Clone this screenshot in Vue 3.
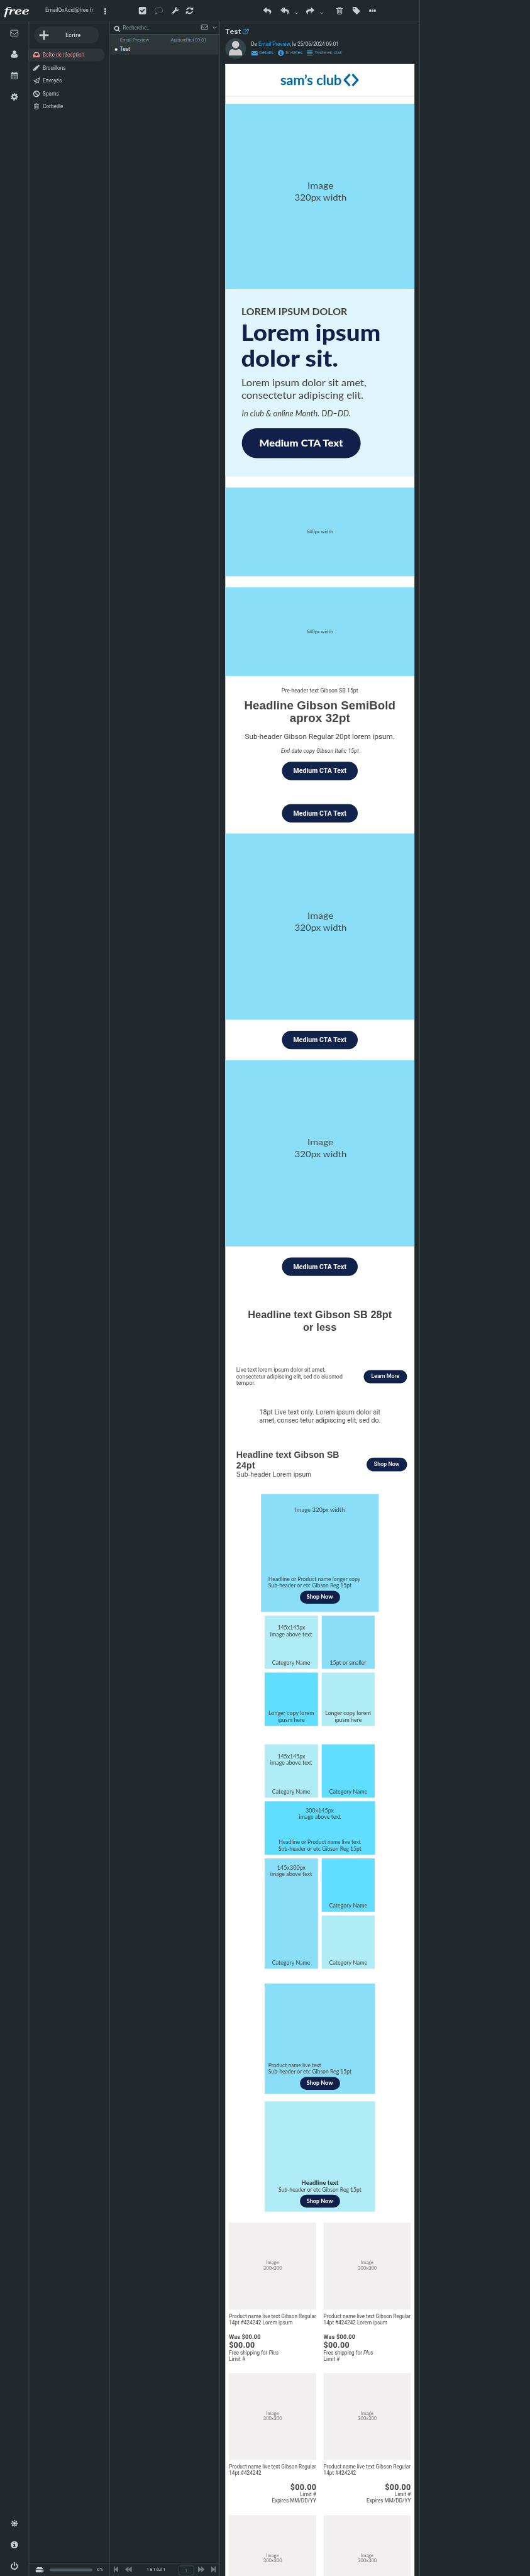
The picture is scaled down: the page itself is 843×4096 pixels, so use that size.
<script setup>
import { h, withDirectives } from 'vue'

// Fits a line of text to the given ink width: display faces are widened,
// interface text is tracked.
const vFit = {
  mounted(el, { value }) {
    if (!value) return
    const scale = 843 / 1440
    const style = getComputedStyle(el)
    const size = parseFloat(style.fontSize)
    const width = el.getBoundingClientRect().width / scale
    const target = value + size * 0.08
    if (/^(Lato|"Liberation Serif")/.test(style.fontFamily)) {
      const origins = { center: 'center', right: 'right' }
      el.style.transformOrigin = (origins[style.textAlign] || 'left') + ' center'
      el.style.transform = `scaleX(${(target / width).toFixed(4)})`
      return
    }
    const gap = (target - width) / (el.textContent.length - 1)
    el.style.letterSpacing = gap.toFixed(3) + 'px'
    el.style.marginRight = (-gap).toFixed(3) + 'px'
  },
}

const L = (props, { slots }) =>
  h('div', { class: 'line' }, [withDirectives(h('span', { class: 'line-in' }, slots.default()), [[vFit, props.w]])])
L.props = ['w']

const s = (d, w = 2) => ({ d, fill: 'none', stroke: 'currentColor', 'stroke-width': w })
const f = (d) => ({ d, fill: 'currentColor', 'fill-rule': 'evenodd' })
const ARROW = 'M8.3 189.8L184.3 37.9C199.7 24.5 224 35.3 224 56v80c160.600 1.800 288 34 288 186.300 0 61.400-39.600 122.300-83.300 154.100-13.700 9.900-33.100-2.500-28.100-18.600 45.300-145-21.500-183.500-176.600-185.700V360c0 20.700-24.300 31.500-39.700 18.200l-176-152c-11.100-9.600-11.100-26.800 0-36.400z'
const icons = {
  mail: ['0 0 22 18', s('M3 1H19Q21 1 21 3V15Q21 17 19 17H3Q1 17 1 15V3Q1 1 3 1Z', 1.7), s('M1.500 5.500L9.500 11.800Q11 12.800 12.500 11.800L20.500 5.500', 1.6)],
  user: ['0 0 18 20', f('M9 0A4.700 5.200 0 0 1 9 10.400A4.700 5.200 0 0 1 9 0ZM4.500 9Q9 13 13.500 9C17 9.500 18 13 18 16.500Q18 20 14.500 20H3.500Q0 20 0 16.500C0 13 1 9.500 4.500 9Z')],
  calendar: ['0 0 18 20', f('M1.500 2.500H3V1.500Q3 0 4.500 0T6 1.500V2.500H12V1.500Q12 0 13.500 0T15 1.500V2.500H16.500Q18 2.500 18 4V18.500Q18 20 16.500 20H1.500Q0 20 0 18.500V4Q0 2.500 1.500 2.500ZM1.500 7V9.800H4.600V7ZM5.500 7V9.800H8.600V7ZM9.500 7V9.800H12.600V7ZM13.500 7V9.800H16.500V7ZM1.500 10.900V14.100H4.600V10.900ZM5.500 10.900V14.100H8.600V10.900ZM9.500 10.900V14.100H12.600V10.900ZM13.500 10.900V14.100H16.500V10.900ZM1.500 15.200V18.500H4.600V15.200ZM5.500 15.200V18.500H8.600V15.200ZM9.500 15.200V18.500H12.600V15.200ZM13.500 15.200V18.500H16.500V15.200Z')],
  cog: ['0 0 20 20', s('M10 4.700A5.300 5.300 0 1 1 9.990 4.700Z', 4), { ...s('M10 1.500A8.500 8.500 0 1 1 9.990 1.500Z', 3), 'stroke-dasharray': '3.700 2.976', 'stroke-dashoffset': '1.850' }],
  sun: ['0 0 20 20', f('M10 0L12 3.500L17 3L16.500 8L20 10L16.500 12L17 17L12 16.500L10 20L8 16.500L3 17L3.500 12L0 10L3.500 8L3 3L8 3.500ZM10 4.500A5.500 5.500 0 1 0 10 15.500A5.500 5.500 0 1 0 10 4.500ZM10 6A4 4 0 1 1 10 14A4 4 0 1 1 10 6Z')],
  info: ['0 0 20 20', f('M10 0A10 10 0 1 1 10 20A10 10 0 1 1 10 0ZM8.300 3.500V6.200H11.700V3.500ZM6.800 8V10H8.300V14H6.800V16H13.200V14H11.700V8Z')],
  power: ['0 0 20 21', s('M5.500 4.500A8.200 8.200 0 1 0 14.500 4.500', 3), s('M10 0V11', 3)],
  dots: ['0 0 6 18', f('M3 0A2.700 2.700 0 1 1 2.990 0ZM3 6.300A2.700 2.700 0 1 1 2.990 6.300ZM3 12.600A2.700 2.700 0 1 1 2.990 12.600Z')],
  check: ['0 0 20 20', f('M3.500 0H16.500Q20 0 20 3.500V16.500Q20 20 16.500 20H3.500Q0 20 0 16.500V3.500Q0 0 3.500 0ZM3.300 10.200L8.700 15.600L17 7.200L14.700 5L8.700 11L5.500 7.900Z')],
  comment: ['0 0 23 20', s('M11.500 1C17.500 1 22 4.300 22 8.700S17.500 16.300 11.500 16.300Q10 16.300 8.700 16Q6 18.600 2.300 19Q4.300 17 4.500 14.500C2.200 13 1 11 1 8.700C1 4.300 5.500 1 11.500 1Z', 1.5)],
  wrench: ['0 0 20 20', f('M19.500 5.200L16 7.500L13 5.800V3L16.300 .600Q13.500 -.700 10.800 1.200Q8 3.300 9 7.500L.800 15.500Q-.500 17 .800 18.800Q2.700 20.500 4.300 19.200L12.300 11Q16 12 18.300 9.500Q20.200 7.200 19.500 5.200ZM3 16A1 1 0 1 1 2.990 18A1 1 0 1 1 3 16Z')],
  refresh: ['0 0 20 20', s('M2 8.500A8.200 7.700 0 0 1 16 5M18 11.500A8.200 7.700 0 0 1 4 15', 3.200), f('M20 .500V8H12.500ZM0 19.500V12H7.500Z')],
  reply: ['0 24 512 464', f(ARROW)],
  replyAll: ['-110 24 622 464', f(ARROW), s('M120 50L-70 208L120 366', 55)],
  forward: ['0 24 512 464', { ...f(ARROW), transform: 'translate(512 0) scale(-1 1)' }],
  chevron: ['0 0 10 6', s('M.700 .700L5 5L9.300 .700', 1.5)],
  trash: ['0 0 18 20', s('M2.500 4V17Q2.500 19 4.500 19H13.500Q15.500 19 15.500 17V4', 1.7), s('M0 4H18M5.500 4L6.300 1H11.700L12.500 4', 1.6), s('M6 7V16.500M9 7V16.500M12 7V16.500', 1.5)],
  tag: ['0 0 20 20', f('M1.500 0H8Q9.500 0 10.700 1.200L19.400 10Q20.500 11.300 19.400 12.500L12.800 19.300Q11.500 20.500 10.200 19.300L1.200 10.500Q0 9.500 0 8V1.500Q0 0 1.500 0ZM4.300 2.600A1.700 1.700 0 1 0 4.310 2.600Z')],
  ellipsis: ['0 0 18 6', f('M1 0H4Q5 0 5 1V5Q5 6 4 6H1Q0 6 0 5V1Q0 0 1 0ZM7.500 0H10.500Q11.500 0 11.500 1V5Q11.500 6 10.500 6H7.500Q6.500 6 6.500 5V1Q6.500 0 7.500 0ZM14 0H17Q18 0 18 1V5Q18 6 17 6H14Q13 6 13 5V1Q13 0 14 0Z')],
  inbox: ['0 0 18 14', f('M4.500 0H13.500Q14.500 0 15 1L18 8V13Q18 14 17 14H1Q0 14 0 13V8L3 1Q3.500 0 4.500 0ZM5 2.300L2.600 8H6L7 10.300H11L12 8H15.400L13 2.300Z')],
  pencil: ['0 0 18 18', f('M12.700 1.200Q14 -.300 15.400 1L17.200 2.800Q18.300 4 17 5.400L15.700 6.600L11.400 2.400ZM10.500 3.400L14.700 7.600L4.500 17.800L0 18V13.600ZM1.500 14.200V16.500H3.800L4.500 15.700L2.200 13.500Z')],
  plane: ['0 0 18 18', f('M18 0L15.300 16.300L10 14.200L6.800 18V12.800L0 10.200ZM15 3L3.500 10L7 11.300ZM16 3.500L8.200 12.200L14.200 14.600Z')],
  ban: ['0 0 18 18', s('M9 1.300A7.700 7.700 0 1 1 8.990 1.300ZM3.500 3.500L14.500 14.500', 2.400)],
  search: ['0 0 17 17', s('M7 1.300A5.700 5.700 0 1 1 6.990 1.300ZM11 11.200L16 16.200', 2.600)],
  external: ['0 0 17 15', s('M9 2H3Q1 2 1 4V12Q1 14 3 14H11Q13 14 13 12V8', 1.500), s('M6.500 9L15 1.500', 2), f('M10.500 0H17V6.500Z')],
  envelope: ['0 0 17 13', f('M0 .500H17V1.500L9.500 7.500Q8.500 8.200 7.500 7.500L0 1.500ZM0 3L7 8.600Q8.500 9.600 10 8.600L17 3V12Q17 13 16 13H1Q0 13 0 12Z')],
  lines: ['0 0 15 14', s('M0 1H15M0 5H15M0 9H15M0 13H15', 1.900)],
  drive: ['0 0 21 14', f('M5 0H16Q17 0 17.500 1L20.500 5.700H.500L3.500 1Q4 0 5 0ZM0 6.800H21V13Q21 14 20 14H1Q0 14 0 13ZM14 9.300V11.300H15.800V9.300ZM17.300 9.300V11.300H19.100V9.300Z')],
  first: ['0 0 12 16', f('M0 0H3V7L12 0V16L3 9V16H0Z')],
  prev: ['0 0 18 16', f('M9 0V7L18 0V16L9 9V16L0 8Z')],
  next: ['0 0 18 16', f('M9 0V7L0 0V16L9 9V16L18 8Z')],
  last: ['0 0 12 16', f('M12 0H9V7L0 0V16L9 9V16H12Z')],
}
const Icon = (props) => {
  const [viewBox, ...paths] = icons[props.n]
  return h('svg', { viewBox, preserveAspectRatio: 'none', class: 'ic' }, paths.map((p) => h('path', p)))
}
Icon.props = ['n']

const folders = [
  { icon: 'inbox', name: 'Boîte de réception', w: 112, on: true },
  { icon: 'pencil', name: 'Brouillons', w: 61.5 },
  { icon: 'plane', name: 'Envoyés', w: 50.5 },
  { icon: 'ban', name: 'Spams', w: 43 },
  { icon: 'trash', name: 'Corbeille', w: 54.5 },
]
</script>

<template>
  <div class="window">
    <div class="app">
      <header class="topbar">
        <div class="brand"><L :w="66">free</L></div>
        <div class="account"><L :w="129.4">EmailOnAcid@free.fr</L></div>
        <Icon n="dots" class="t-dots" />
        <Icon n="check" class="t-check" />
        <Icon n="comment" class="t-comment" />
        <Icon n="wrench" class="t-wrench" />
        <Icon n="refresh" class="t-refresh" />
        <Icon n="reply" class="t-reply" />
        <Icon n="replyAll" class="t-all" />
        <Icon n="chevron" class="t-chev" />
        <Icon n="forward" class="t-fwd" />
        <Icon n="chevron" class="t-chev2" />
        <Icon n="trash" class="t-trash" />
        <Icon n="tag" class="t-tag" />
        <Icon n="ellipsis" class="t-more" />
      </header>

      <div class="cols">
        <nav class="rail">
          <Icon n="mail" class="r-mail" />
          <Icon n="user" class="r-user" />
          <Icon n="calendar" class="r-cal" />
          <Icon n="cog" class="r-cog" />
          <div class="grow"></div>
          <Icon n="sun" class="r-sun" />
          <Icon n="info" class="r-info" />
          <Icon n="power" class="r-power" />
        </nav>

        <aside class="folders">
          <div class="compose">
            <span class="plus"></span>
            <L :w="40">Ecrire</L>
          </div>
          <div v-for="x in folders" :key="x.name" class="folder" :class="{ on: x.on }">
            <Icon :n="x.icon" :class="'f-' + x.icon" />
            <L :w="x.w">{{ x.name }}</L>
          </div>
          <div class="grow"></div>
          <div class="quota">
            <Icon n="drive" class="q-drive" />
            <span class="bar"></span>
            <L :w="14.6">0%</L>
          </div>
        </aside>

        <section class="list">
          <div class="search">
            <Icon n="search" class="s-glass" />
            <L :w="74">Recherche...</L>
            <Icon n="mail" class="s-mail" />
            <Icon n="chevron" class="s-chev" />
          </div>
          <div class="msg">
            <div class="meta"><L :w="78">Email Preview</L><L :w="96">Aujourd'hui 09:01</L></div>
            <div class="subject"><i></i><L :w="26.5">Test</L></div>
          </div>
          <div class="grow"></div>
          <div class="pager">
            <Icon n="first" class="p-first" />
            <Icon n="prev" class="p-prev" />
            <L :w="50.5">1 à 1 sur 1</L>
            <span class="page">1</span>
            <Icon n="next" class="p-next" />
            <Icon n="last" class="p-last" />
          </div>
        </section>

        <main class="view">
          <div class="title"><L :w="41">Test</L><Icon n="external" class="v-ext" /></div>
          <div class="sender">
            <svg class="avatar" viewBox="0 0 56 56">
              <circle cx="28" cy="28" r="28" fill="#34454a" />
              <circle cx="28" cy="17" r="10" fill="#cbcbcb" />
              <path d="M10 45V42Q11 30 20 29.500Q28 34.500 36 29.500Q45 30 46 42V45Q46 47 43.500 47H12.500Q10 47 10 45Z" fill="#cbcbcb" />
            </svg>
            <div class="info">
              <L :w="237.500" class="from">De <a>Email Preview</a>, le 25/06/2024 09:01</L>
              <div class="links">
                <Icon n="envelope" class="k-env" /><L :w="38">Détails</L>
                <Icon n="info" class="k-info" /><L :w="45">En-têtes</L>
                <Icon n="lines" class="k-lines" /><L :w="74">Texte en clair</L>
              </div>
            </div>
          </div>

          <article class="mail">
            <div class="logo">
              <L :w="163">sam’s club</L>
              <svg viewBox="0 0 42 35"><path d="M17.500 2L3.500 17.500L17.500 33M24.500 2L38.500 17.500L24.500 33" fill="none" stroke="#0067a0" stroke-width="5.600" /></svg>
            </div>
            <div class="pic hero-pic"><L :w="69">Image</L><L :w="139.500">320px width</L></div>
            <div class="hero">
              <L :w="285" class="h-eyebrow">LOREM IPSUM DOLOR</L>
              <div class="h-title"><L :w="374">Lorem ipsum</L><L :w="259">dolor sit.</L></div>
              <div class="h-body"><L :w="337">Lorem ipsum dolor sit amet,</L><L :w="329">consectetur adipiscing elit.</L></div>
              <L :w="294" class="h-date">In club &amp; online Month. DD–DD.</L>
              <div class="h-cta"><L :w="225">Medium CTA Text</L></div>
            </div>
            <div class="pic wide w1"><L :w="70.600">640px width</L></div>
            <div class="pic wide w2"><L :w="70.600">640px width</L></div>

            <div class="copy">
              <L :w="207" class="c-pre">Pre-header text Gibson SB 15pt</L>
              <div class="c-head"><L :w="408">Headline Gibson SemiBold</L><L :w="161.500">aprox 32pt</L></div>
              <L :w="405.600" class="c-sub">Sub-header Gibson Regular 20pt lorem ipsum.</L>
              <L :w="210.700" class="c-end">End date copy GIbson Italic 15pt</L>
              <div class="cta"><L :w="143">Medium CTA Text</L></div>
              <div class="cta second"><L :w="143">Medium CTA Text</L></div>
            </div>
            <div class="pic tall"><L :w="69">Image</L><L :w="139.500">320px width</L></div>
            <div class="strip"><div class="cta"><L :w="143">Medium CTA Text</L></div></div>
            <div class="pic tall"><L :w="69">Image</L><L :w="139.500">320px width</L></div>
            <div class="strip"><div class="cta"><L :w="143">Medium CTA Text</L></div></div>

            <div class="head28"><L :w="389">Headline text Gibson SB 28pt</L><L :w="89">or less</L></div>
            <div class="split live">
              <div><L :w="241">Live text lorem ipsum dolor sit amet,</L><L :w="287.500">consectetur adipiscing elit, sed do eiusmod</L><L :w="50.600">tempor.</L></div>
              <div class="small-cta learn"><L :w="75">Learn More</L></div>
            </div>
            <div class="live18"><L :w="327">18pt Live text only. Lorem ipsum dolor sit</L><L :w="328.500">amet, consec tetur adipiscing elit, sed do.</L></div>
            <div class="split head24">
              <div><L :w="277.500">Headline text Gibson SB</L><L :w="49">24pt</L><L :w="202" class="sub24">Sub-header Lorem ipsum</L></div>
              <div class="small-cta shop"><L :w="68">Shop Now</L></div>
            </div>

            <div class="panel big">
              <L :w="134" class="p-cap">Image 320px width</L>
              <div class="grow"></div>
              <div class="p-left"><L :w="249">Headline or Product name longer copy</L><L :w="225">Sub-header or etc Gibson Reg 15pt</L></div>
              <div class="pill"><L :w="70">Shop Now</L></div>
            </div>
            <div class="tiles">
              <div class="tile a"><div class="up"><L :w="74">145x145px</L><L :w="112.600">image above text</L></div><L :w="102.600">Category Name</L></div>
              <div class="tile b"><L :w="98">15pt or smaller</L></div>
              <div class="tile c"><L :w="123">Longer copy lorem</L><L :w="72">ipusm here</L></div>
              <div class="tile a"><L :w="123">Longer copy lorem</L><L :w="72">ipusm here</L></div>
            </div>
            <div class="tiles second-set">
              <div class="tile a"><div class="up"><L :w="74">145x145px</L><L :w="112.600">image above text</L></div><L :w="102.600">Category Name</L></div>
              <div class="tile c"><L :w="102.600">Category Name</L></div>
              <div class="tile c span2"><div class="up near"><L :w="76">300x145px</L><L :w="112.600">image above text</L></div><L :w="221.500">Headline or Product name live text</L><L :w="224">Sub-header or etc Gibson Reg 15pt</L></div>
              <div class="tile b high"><div class="up near"><L :w="76">145x300px</L><L :w="112.600">image above text</L></div><L :w="102.600">Category Name</L></div>
              <div class="tile c"><L :w="102.600">Category Name</L></div>
              <div class="tile a"><L :w="102.600">Category Name</L></div>
            </div>
            <div class="panel mid">
              <div class="p-left"><L :w="142.500">Product name live text</L><L :w="225">Sub-header or etc Gibson Reg 15pt</L></div>
              <div class="pill"><L :w="70">Shop Now</L></div>
            </div>
            <div class="panel mid pale">
              <div class="p-center"><L :w="100" class="strong">Headline text</L><L :w="224">Sub-header or etc Gibson Reg 15pt</L></div>
              <div class="pill"><L :w="70">Shop Now</L></div>
            </div>

            <div class="products">
              <div v-for="n in 2" :key="'a' + n" class="card one">
                <div class="thumb"><L :w="33">Image</L><L :w="50">300x300</L></div>
                <div class="name"><L :w="235.500">Product name live text Gibson Regular</L><L :w="172">14pt #424242 Lorem ipsum</L></div>
                <L :w="84.700" class="was">Was $00.00</L>
                <L :w="68.500" class="price">$00.00</L>
                <div class="fine"><L :w="133.600">Free shipping for <em>Plus</em></L><L :w="43">Limit #</L></div>
              </div>
              <div v-for="n in 2" :key="'b' + n" class="card two">
                <div class="thumb"><L :w="33">Image</L><L :w="50">300x300</L></div>
                <div class="name"><L :w="235.500">Product name live text Gibson Regular</L><L :w="87">14pt #424242</L></div>
                <L :w="68.500" class="price">$00.00</L>
                <div class="fine"><L :w="42.500">Limit #</L><L :w="119">Expires MM/DD/YY</L></div>
              </div>
              <div v-for="n in 2" :key="'c' + n" class="card">
                <div class="thumb"><L :w="33">Image</L><L :w="50">300x300</L></div>
              </div>
            </div>
          </article>
        </main>
      </div>
    </div>
  </div>
</template>

<style>
html, body { margin: 0; background: #21292c; }
.line { white-space: nowrap; }
.line-in { display: inline-block; white-space: pre; }
.ic { display: block; flex: none; overflow: visible; }
</style>

<style scoped>
.window { width: 843px; height: 4096px; overflow: hidden; background: #21292c; }
.app { width: 1440px; height: 7000px; overflow: hidden; transform: scale(0.585417, 0.585143); transform-origin: 0 0; font-family: Roboto, "Liberation Sans", sans-serif; font-size: 14px; color: #c5d1d3; display: flex; flex-direction: column; }
.grow { flex: 1; }

.topbar { box-sizing: border-box; width: 1141px; height: 58px; border-bottom: 1px solid #4d6066; border-right: 1px solid #4d6066; display: flex; align-items: flex-start; padding-top: 19px; flex: none; }
.brand { box-sizing: border-box; width: 123px; padding-left: 11px; margin-top: -4px; font: italic 28px/32px "Liberation Serif", serif; color: #fff; -webkit-text-stroke: 0.6px #fff; }
.account { width: 160px; line-height: 18px; }
.t-dots { width: 6px; height: 17.500px; margin: 3px 0 0 0; }
.t-check { width: 20px; height: 20px; margin-left: 88px; }
.t-comment { width: 23px; height: 20px; margin-left: 23px; color: #6c787b; }
.t-wrench { width: 20px; height: 20px; margin-left: 23px; }
.t-refresh { width: 20px; height: 20px; margin-left: 19px; }
.t-reply { width: 22px; height: 19px; margin: 1px 0 0 190px; }
.t-all { width: 23px; height: 19px; margin: 1px 0 0 25px; }
.t-chev { width: 10px; height: 5px; margin: 14px 0 0 15px; }
.t-fwd { width: 22px; height: 19px; margin: 1px 0 0 22px; }
.t-chev2 { width: 10px; height: 5px; margin: 14px 0 0 15px; }
.t-trash { width: 17px; height: 20px; margin-left: 35px; }
.t-tag { width: 20px; height: 20px; margin-left: 27px; }
.t-more { width: 18px; height: 6px; margin: 7px 0 0 25px; }

.cols { flex: 1; min-height: 0; display: flex; width: 1141px; }
.rail { width: 78px; border-right: 1px solid #4d6066; display: flex; flex-direction: column; align-items: center; }
.r-mail { width: 22px; height: 18px; margin-top: 23px; }
.r-user { width: 18px; height: 20px; margin-top: 38px; }
.r-cal { width: 18px; height: 20px; margin-top: 38px; }
.r-cog { width: 20px; height: 20px; margin-top: 38px; }
.r-sun { width: 20px; height: 20px; margin-bottom: 38px; }
.r-info { width: 20px; height: 20px; margin-bottom: 37px; }
.r-power { width: 20px; height: 21px; margin-bottom: 17px; }

.folders { width: 218px; border-right: 1px solid #4d6066; display: flex; flex-direction: column; }
.compose { box-sizing: border-box; width: 176px; height: 46px; margin: 14px 0 14px 14px; border-radius: 23px; background: #2c3437; display: flex; align-items: center; padding-left: 14px; font-size: 15px; font-weight: 700; color: #bdc1c2; line-height: 46px; gap: 46px; flex: none; }
.plus { width: 25px; height: 25px; background: linear-gradient(#cacccc, #cacccc) center / 25px 5px no-repeat, linear-gradient(#cacccc, #cacccc) center / 5px 25px no-repeat; }
.folder { box-sizing: border-box; width: 204px; height: 35px; padding-left: 11px; display: flex; align-items: center; line-height: 35px; border-radius: 0 14px 14px 0; flex: none; }
.folder.on { background: #2d3538; color: #f19196; }
.folder .line { margin-left: 8px; }
.folder svg { width: 18px; height: 18px; }
.folder .f-inbox { height: 14px; margin-top: -2px; }
.folder .f-trash { width: 14px; height: 16px; margin: -1px 2px 0; }
.folder .f-pencil { margin-top: -2px; }
.folder .f-plane { margin-top: -2px; }
.quota { height: 34px; border-top: 1px solid #4d6066; display: flex; padding-left: 18px; font-size: 12px; line-height: 34px; }
.q-drive { width: 21px; height: 14px; margin-top: 10px; }
.bar { width: 116px; height: 7px; border-radius: 4px; background: #4d6066; margin: 14px 13px 0 17px; }

.list { width: 299px; border-right: 1px solid #4d6066; display: flex; flex-direction: column; }
.search { box-sizing: border-box; height: 36px; border-bottom: 1px solid #4d6066; display: flex; padding-left: 12px; line-height: 35px; color: #829699; flex: none; }
.search svg { color: #c5d1d3; }
.s-glass { width: 17px; height: 17px; margin: 12px 7px 0 0; }
.search .line { width: 212px; }
.s-mail { width: 19px; height: 14px; margin: 9px 13px 0 0; }
.s-chev { width: 11px; height: 6px; margin-top: 14px; }
.msg { height: 54px; background: #2e3639; flex: none; color: #7f9699; }
.meta { display: flex; justify-content: space-between; padding: 2px 36px 0 28px; font-size: 13px; line-height: 25px; }
.subject { display: flex; align-items: center; color: #fff; line-height: 26px; }
.subject i { width: 6.600px; height: 6.600px; border-radius: 50%; background: #fff; margin: 1px 7px 0 14px; }
.pager { height: 34px; border-top: 1px solid #4d6066; display: flex; font-size: 12px; line-height: 34px; }
.pager svg { color: #707b7f; margin-top: 8px; height: 16px; }
.p-first { width: 12px; margin-left: 11px; }
.p-prev { width: 18px; margin-left: 19px; }
.pager .line { width: 87px; margin-left: 40px; }
.page { box-sizing: border-box; width: 42px; height: 26px; border: 1px solid #4d6066; border-radius: 4px; margin-top: 6px; text-align: center; line-height: 25px; color: #707b7f; }
.p-next { width: 18px; margin-left: 11px; }
.p-last { width: 12px; margin-left: 18px; }

.view { box-sizing: border-box; width: 543px; border-right: 1px solid #4d6066; padding: 15px 14px 0; overflow: hidden; }
.title { display: flex; font-size: 20px; font-weight: 700; line-height: 24px; height: 31px; }
.title .line { margin-top: 0; width: 47px; }
.v-ext { width: 17px; height: 15px; margin-top: 5px; color: #359bdb; }
.sender { display: flex; height: 70px; }
.avatar { width: 56px; height: 56px; margin-right: 14px; }
.from { line-height: 18px; margin-top: 5.500px; }
.from a, .links { color: #3a9fe0; }
.links { display: flex; font-size: 13px; line-height: 16px; margin-top: 7px; }
.k-env { width: 17px; height: 13px; margin: 3px 4px 0 1px; }
.k-info { width: 16px; height: 16px; margin: 1px 5px 0 12px; }
.k-lines { width: 15px; height: 14px; margin: 2px 6px 0 12px; }

.mail { width: 514px; height: 6826px; background: #fff; color: #424242; overflow: hidden; }
.logo { box-sizing: border-box; height: 88px; border-bottom: 1px solid #ccc; margin-bottom: 20px; display: flex; padding: 21px 0 0 150px; font: 500 35px/44px Lato, sans-serif; color: #0067a0; -webkit-text-stroke: 0.900px #0067a0; }
.logo .line { width: 171px; }
.logo svg { width: 42px; height: 35px; margin-top: 5px; }
.pic { box-sizing: border-box; background: #8bdef8; display: flex; flex-direction: column; align-items: center; justify-content: center; text-align: center; font-family: Lato, sans-serif; font-size: 24px; line-height: 32.600px; padding: 0 0 28px 4px; }
.hero-pic { height: 504px; }
.tall { height: 506px; }
.wide { height: 241px; font-size: 14px; line-height: 18px; padding: 0; }
.w1 { margin-top: 30px; }
.w2 { margin-top: 30px; }
.hero { box-sizing: border-box; height: 507px; margin-top: 1.500px; background: #def5fc; padding: 43px 0 0 45px; font-family: Lato, sans-serif; }
.h-eyebrow { font-size: 27px; line-height: 30px; font-weight: 700; margin-left: -1px; }
.h-title { margin: 7px 0 0 -2px; font-size: 61px; line-height: 70.500px; font-weight: 900; color: #10204b; }
.h-body { margin: 12.600px 0 0 -1px; font-size: 27.500px; line-height: 35px; }
.h-date { margin: 20px 0 27px; font-size: 21.500px; line-height: 26px; font-style: italic; }
.h-cta { width: 323px; height: 81px; border-radius: 41px; background: #10204b; color: #fff; font-size: 27px; line-height: 79px; font-weight: 900; text-align: center; }

.copy { box-sizing: border-box; height: 428px; padding-top: 30.500px; text-align: center; }
.c-pre { font-size: 15px; line-height: 18px; }
.c-head { margin-top: 14.300px; font: 700 32px/34.400px "Liberation Sans", Arial, sans-serif; }
.c-sub { margin-top: 20.400px; font-size: 20px; line-height: 24px; }
.c-end { margin-top: 18.900px; font-size: 15px; line-height: 18px; font-style: italic; }
.cta { width: 206px; height: 50px; margin: 0 auto; border-radius: 25px; background: #11224b; color: #fff; font-size: 18px; font-weight: 700; line-height: 50px; text-align: center; }
.c-end + .cta { margin-top: 20.300px; }
.cta.second { margin-top: 65px; }
.strip { box-sizing: border-box; height: 110px; padding-top: 30px; }

.head28 { box-sizing: border-box; height: 217.300px; padding-top: 59.500px; font: 700 28px/33.500px "Liberation Sans", Arial, sans-serif; text-align: center; }
.split { display: flex; justify-content: space-between; padding: 0 20.500px 0 30px; }
.small-cta { height: 36.500px; border-radius: 18.300px; background: #11224b; color: #fff; font: 500 15px/35px Roboto, sans-serif; text-align: center; }
.live { height: 112px; font-size: 15px; line-height: 18px; margin-top: 0; }
.learn { width: 117.500px; margin-top: 9px; }
.live18 { height: 113.500px; font-size: 18px; line-height: 22.100px; text-align: center; }
.head24 { height: 121px; font: 700 24px/29px "Liberation Sans", Arial, sans-serif; }
.sub24 { font-size: 17.500px; line-height: 20px; font-weight: 400; }
.shop { width: 109.500px; margin-top: 22px; }
.head28 { margin-bottom: 30px; height: 217.300px; margin-bottom: 0; }

.panel, .tiles { font-family: Lato, sans-serif; font-size: 15px; line-height: 18px; }
.panel { box-sizing: border-box; margin: 0 auto; display: flex; flex-direction: column; justify-content: flex-end; background: #8bdef8; }
.big { width: 320px; height: 320px; padding: 32px 0 22px; margin-bottom: 10px; }
.p-cap { font-size: 16px; line-height: 20px; text-align: center; }
.big .p-left { padding-left: 20px; }
.mid { width: 300px; height: 300px; padding-bottom: 11px; margin-bottom: 20px; }
.mid .p-left { padding-left: 10px; }
.pale { background: #afecf6; margin-bottom: 30px; }
.p-center { text-align: center; }
.strong { font-weight: 900; }
.pill { width: 109px; height: 35px; margin: 6px auto 0; border-radius: 18px; background: #10204b; color: #fff; font-weight: 900; line-height: 33px; text-align: center; }
.tiles { display: grid; grid-template-columns: 145px 144px; gap: 10px; grid-auto-rows: 145px; width: 300px; margin: 0 auto; }
.second-set { margin: 50px auto 40px; }
.tile { box-sizing: border-box; display: flex; flex-direction: column; justify-content: flex-end; text-align: center; padding-bottom: 8px; }
.tile.a { background: #afecf6; }
.tile.b { background: #8bdef8; }
.tile.c { background: #60ddff; }
.up { margin-bottom: auto; padding-top: 23px; }
.up.near { padding-top: 15px; }
.span2 { grid-column: span 2; width: 300px; }
.high { grid-row: span 2; }

.products { display: grid; grid-template-columns: 237px 237px; column-gap: 20px; padding-left: 10px; }
.card.one { height: 408.750px; }
.card.two { height: 386.250px; }
.thumb { box-sizing: border-box; height: 236px; background: #f1eff0; display: flex; flex-direction: column; align-items: center; justify-content: center; text-align: center; font: 12.500px/15px Lato, sans-serif; color: #6e6e6e; padding-bottom: 4px; }
.name { margin-top: 9.800px; font-size: 14px; line-height: 16.500px; }
.was { margin-top: 21px; font-size: 15.500px; line-height: 20px; font-weight: 700; }
.price { font-size: 21.500px; line-height: 24px; font-weight: 700; }
.one .fine { margin-top: 1.700px; font-size: 14px; line-height: 16px; }
.two .price { margin-top: 20px; line-height: 22.500px; text-align: right; }
.two .fine { font-size: 14px; line-height: 17px; text-align: right; }
</style>
